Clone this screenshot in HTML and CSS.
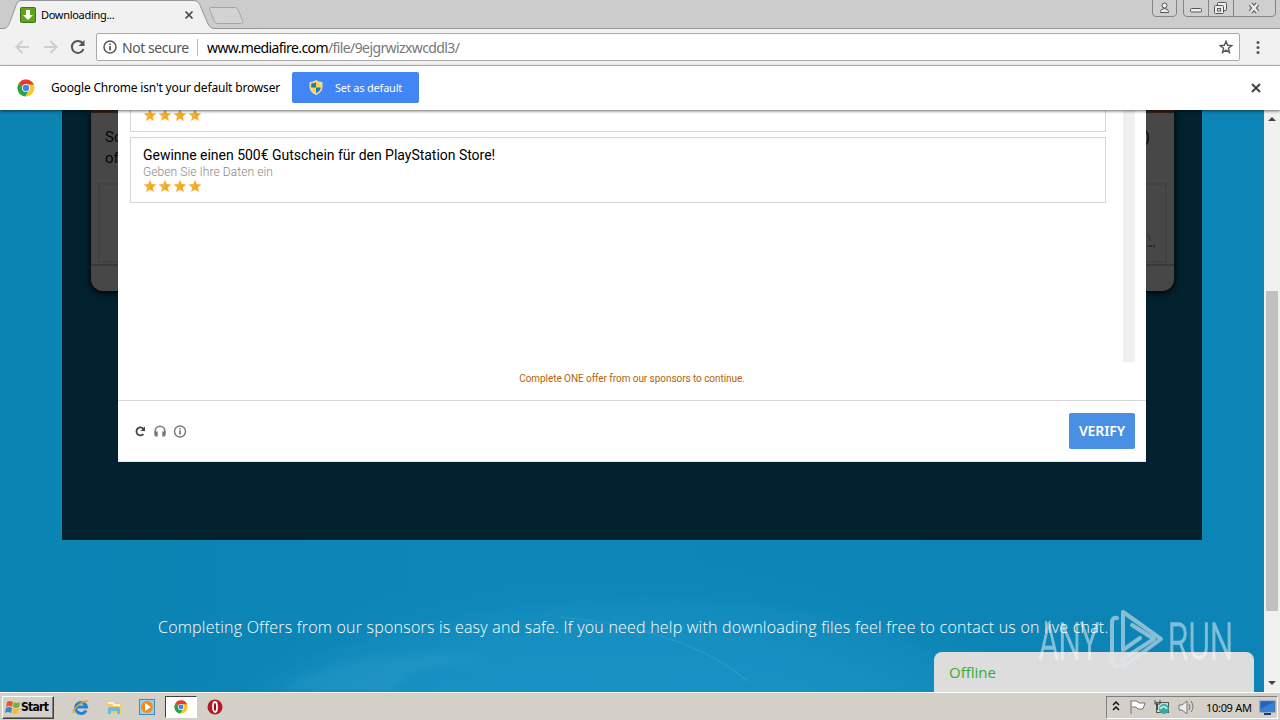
FILE: index.html
```html
<!DOCTYPE html>
<html lang="en">
<head>
<meta charset="utf-8">
<title>Downloading...</title>
<link rel="stylesheet" href="styles.css">
</head>
<body>
<svg class="defs" width="0" height="0">
  <defs>
    <symbol id="star" viewBox="0 0 14 14"><path d="M7 .8l1.800 4.100 4.600.5-3.500 3 1 4.600L7 10.700 3.100 13l1-4.600-3.500-3 4.600-.5z" fill="#f3b13c"/><path d="M7 3l1.100 3 3 .3-2.400 2 .7 2.800L7 9.500z" fill="#f5a800"/></symbol>
    <symbol id="chrome" viewBox="0 0 18 18">
      <circle cx="9" cy="9" r="8.500" fill="#fbc926"/>
      <path d="M9 9L1.640 4.750A8.500 8.500 0 0 1 16.800 5.500H9z" fill="#e33b2e"/>
      <path d="M9 9L1.640 4.750A8.500 8.500 0 0 0 8.200 17.500L12 11z" fill="#2ba24c"/>
      <circle cx="9" cy="9" r="4" fill="#fff"/><circle cx="9" cy="9" r="3.200" fill="#4385ee"/>
    </symbol>
  </defs>
</svg>

<header class="tabstrip">
  <svg class="tab-shape" width="260" height="29"><path d="M0 28.500H4C8 28 9 24 11 19L16.500 4Q18 .5 21 .5H194Q198 .5 199.500 4L208 24Q210 28.500 214 28.500H260V29H0z" fill="#f1f1f1"/><path d="M0 28.500H4C8 28 9 24 11 19L16.500 4Q18 .5 21 .5H194Q198 .5 199.500 4L208 24Q210 28.500 214 28.500H260" fill="none" stroke="#949494"/><path d="M211 7.500h24q2 0 3 2l4.500 11q1 3-1 3h-24q-2 0-3-2l-5-12q-.5-2 1.500-2z" fill="#d3d3d3" stroke="#a5a5a5"/></svg>
  <div class="tab">
    <svg width="16" height="16"><rect x=".5" y=".5" width="15" height="15" rx="1" fill="#5fa51b" stroke="#397711"/><path d="M6 3h4v5h3l-5 5-5-5h3z" fill="#fff"/></svg>
    <span class="tab-title">Downloading...</span>
    <svg class="tab-close" width="10" height="10"><path d="M1.500 1.500l7 7m0-7l-7 7" stroke="#444" stroke-width="1.700"/></svg>
  </div>
  <svg class="window-buttons" width="128" height="18">
    <g fill="#cfcfcf" stroke="#858585"><path d="M.5-1V13Q.5 16.500 4 16.500H20Q24.500 16.500 24.500 13V-1z"/><path d="M31.500-1V13Q31.500 16.500 35 16.500H119Q123.500 16.500 123.500 13V-1zM56.500 0V16M81.500 0V16"/></g>
    <g fill="#eee" stroke="#555"><path d="M8.500 12.500v-1q0-2.500 4-3 4 .5 4 3v1z"/><circle cx="12.500" cy="5.500" r="2.500"/><rect x="38.500" y="8.500" width="11" height="3.500" rx="1"/><rect x="65.500" y="2.500" width="9" height="8" rx="1"/><rect x="62.500" y="5.500" width="9" height="8" rx="1"/><rect x="65.500" y="8.500" width="3" height="2.500"/></g>
    <path d="M98.500 4l7 8m0-8l-7 8" stroke="#555" stroke-width="4.500"/><path d="M98.500 4l7 8m0-8l-7 8" stroke="#eee" stroke-width="2.500"/>
  </svg>
</header>

<nav class="toolbar">
  <svg width="96" height="36" fill="none"><path d="M29 18H16.500m6-6l-6 6 6 6M44 18h12.500m-6-6l6 6-6 6" stroke="#cecece" stroke-width="2"/><path d="M82.800 14.500A6 6 0 1 0 83.500 20" stroke="#555" stroke-width="2"/><path d="M84.500 11v6h-6z" fill="#555"/></svg>
  <div class="omnibox">
    <svg width="14" height="14"><circle cx="7" cy="7" r="6" fill="none" stroke="#555" stroke-width="1.500"/><path d="M7 6v4.500M7 3.500v1.500" stroke="#555" stroke-width="1.700"/></svg>
    <span class="secure">Not secure</span>
    <span class="url"><b>www.mediafire.com</b><i>/file/9ejgrwizxwcddl3/</i></span>
    <svg class="bookmark" width="14" height="14"><path d="M7 1.300l1.600 4 4.200.3-3.300 2.700 1 4.200L7 10.200l-3.500 2.300 1-4.200L1.200 5.600l4.200-.3z" fill="none" stroke="#555" stroke-width="1.400"/></svg>
  </div>
  <svg class="menu" width="4" height="14" fill="#555"><circle cx="2" cy="2.500" r="1.500"/><circle cx="2" cy="7.500" r="1.500"/><circle cx="2" cy="12.500" r="1.500"/></svg>
</nav>

<section class="infobar">
  <svg width="18" height="18"><use href="#chrome"/></svg>
  <span class="info-text">Google Chrome isn't your default browser</span>
  <button class="default-button">
    <svg width="14" height="15"><path d="M7 .5Q9.500 2.500 13 2.500V7q0 5-6 7.500Q1 12 1 7V2.500Q4.500 2.500 7 .5z" fill="#ffd84c" stroke="#e8e4c4"/><path d="M7 2.200v5.300H2.200V3.600Q5 3.600 7 2.200zM7 7.500h4.800Q11.500 11 7 13.200z" fill="#2178b8"/></svg>
    <span>Set as default</span>
  </button>
  <svg class="info-close" width="10" height="10"><path d="M1 1l8 8m0-8L1 9" stroke="#444" stroke-width="2"/></svg>
</section>

<main class="page">
  <div class="viewport">
    <svg class="backdrop" width="1264" height="582">
      <defs>
        <radialGradient id="glow"><stop offset="0" stop-color="#1d97c9"/><stop offset=".7" stop-color="#1892c4" stop-opacity=".75"/><stop offset="1" stop-color="#1188bb" stop-opacity="0"/></radialGradient>
        <filter id="soft"><feGaussianBlur stdDeviation="5"/></filter>
      </defs>
      <ellipse cx="625" cy="700" rx="490" ry="250" fill="url(#glow)"/>
      <path d="M250 582Q350 508 600 491Q820 480 935 545L980 582z" fill="#2199c9" opacity=".14" filter="url(#soft)"/>
      <path d="M560 507Q690 520 748 572" fill="none" stroke="#4aaed5" opacity=".28" stroke-width="1.500"/>
      <path d="M290 574q70-40 200-28l-75 14-28 22h-100z" fill="#42a7d0" opacity=".2" filter="url(#soft)"/>
    </svg>
    <section class="shade">
      <div class="under-card">
        <p class="left-copy">So<br>of</p>
        <p class="right-copy">)</p>
        <div class="under-box"><svg width="18" height="22"><path d="M-1 4q4 0 4 6" fill="none" stroke="#292929"/><path d="M-2 15h10" stroke="#292929" stroke-width="2" stroke-dasharray="3 1"/></svg></div>
        <div class="under-line"></div>
      </div>
      <div class="modal">
        <div class="offers-row">
          <div class="offers">
            <article class="offer previous"><div class="stars"><svg><use href="#star"/></svg><svg><use href="#star"/></svg><svg><use href="#star"/></svg><svg><use href="#star"/></svg></div></article>
            <article class="offer"><h2>Gewinne einen 500€ Gutschein für den PlayStation Store!</h2><p>Geben Sie Ihre Daten ein</p><div class="stars"><svg><use href="#star"/></svg><svg><use href="#star"/></svg><svg><use href="#star"/></svg><svg><use href="#star"/></svg></div></article>
          </div>
          <div class="offer-scroll"></div>
        </div>
        <p class="notice"><span>Complete ONE offer from our sponsors to continue.</span></p>
        <footer class="modal-footer">
          <svg width="56" height="16" fill="none"><path d="M10.500 5.800A4 4 0 1 0 10.500 11" stroke="#444" stroke-width="1.800"/><path d="M12 3.500v4.500H7.500z" fill="#444"/><path d="M22.200 11V8a4.800 4.800 0 0 1 9.600 0v3" stroke="#777" stroke-width="1.600"/><path d="M21.500 8.500h3.200V13.500h-1.500q-1.700 0-1.700-1.500zM32.500 8.500h-3.200V13.500h1.500q1.700 0 1.700-1.500z" fill="#777"/><circle cx="47" cy="8.500" r="5.500" stroke="#777" stroke-width="1.400"/><path d="M47 7.500v4M47 5.300V6.500" stroke="#777" stroke-width="1.700"/></svg>
          <button class="verify">VERIFY</button>
        </footer>
      </div>
    </section>
    <p class="help"><span>Completing Offers from our sponsors is easy and safe. If you need help with downloading files feel free to contact us on live chat.</span></p>
    <aside class="chat"><span>Offline</span></aside>
    <svg class="watermark" width="204" height="70">
      <g fill="#fff" stroke="#fff" stroke-width="1.300" opacity=".48"><text x="2" y="53" textLength="60" lengthAdjust="spacingAndGlyphs">ANY</text><text x="131" y="53" textLength="65" lengthAdjust="spacingAndGlyphs">RUN</text></g>
      <g fill="none" stroke="#e0e7ec" opacity=".58" stroke-width="4" stroke-linejoin="round" stroke-linecap="round"><path d="M80 12q-5-1-5 5V56q0 5 5 4M106 20L86 6V44l17-12M86 6L124 33L86 61v-8l31-20-22-14"/></g>
    </svg>
  </div>
  <div class="page-scroll">
    <svg width="16" height="16"><path d="M4 11l4-4 4 4z" fill="#444"/></svg><div class="thumb"></div><svg class="down" width="16" height="16"><path d="M4 5l4 4 4-4z" fill="#444"/></svg>
  </div>
</main>

<footer class="taskbar">
  <button class="start"><svg width="17" height="16"><path d="M3 3q3-2 6 0L8 8Q5 6 2 8z" fill="#e85b27"/><path d="M10 3q3 2 6 0l-1 5q-3 2-6 0z" fill="#71b33c"/><path d="M2 9q3-2 6 0l-1 5q-3-2-6 0z" fill="#3583c8"/><path d="M9 9q3 2 6 0l-1 5q-3 2-6 0z" fill="#f7bd25"/></svg><span>Start</span></button>
  <div class="launchers">
    <svg width="18" height="18" fill="none"><path d="M14 12.500A5.500 5.500 0 1 1 14.500 9H4" stroke="#2682d0" stroke-width="3"/><path d="M2 15Q-1 13 8 6 15 1 16 4" stroke="#e0ab20" stroke-width="1.500"/></svg>
    <svg width="18" height="18"><path d="M2 3h5l1 2h8v10H2z" fill="#f2cc66"/><path d="M3 5h5l1 2h6" stroke="#fff4b9" stroke-width="2" fill="none"/><path d="M3 16v-5q0-2 2-2h8q2 0 2 2v5h-3v-3H6v3z" fill="#6fb9df"/></svg>
    <svg width="18" height="18"><rect x="1.500" y="1.500" width="15" height="15" fill="#9bd0ec" stroke="#4389c6"/><circle cx="9" cy="9" r="6" fill="#ed8d22"/><path d="M7 5l6 4-6 4z" fill="#fff"/></svg>
    <div class="active-app"><svg width="14" height="14"><use href="#chrome"/></svg></div>
    <svg width="18" height="18"><circle cx="9" cy="9" r="7.500" fill="#b41821"/><ellipse cx="9" cy="9" rx="2" ry="5" fill="#8b1018" stroke="#fff" stroke-width="1.800"/></svg>
  </div>
  <div class="tray">
    <svg width="88" height="20" fill="none"><path d="M6 8l3-3 3 3M6 13l3-3 3 3" stroke="#111" stroke-width="1.500"/><path d="M24 17V3M25 4h5l2 2h6l-2 6h-5l-2-2h-4" fill="#fff" stroke="#777"/><rect x="49.500" y="5.500" width="12" height="10" fill="#c9dce2" stroke="#555"/><path d="M48 3v4h5V3m-2.500 4v6" stroke="#444"/><circle cx="57" cy="12" r="5" fill="#36aaa0"/><path d="M53 12q4-5 7 0" stroke="#b1ede0" stroke-width="2"/><path d="M72 8h3l5-4v13l-5-4h-3z" fill="#eee" stroke="#777"/><path d="M82 7q2 3 0 6M84 4q4 6 0 11" stroke="#777"/></svg>
    <span class="clock">10:09 AM</span>
    <svg width="17" height="18"><rect x="1" y="3" width="15" height="11" fill="#2463bb" stroke="#6488bc"/><path d="M1 11l14-7v10H1z" fill="#3881d2"/><path d="M5 16h7" stroke="#173d76" stroke-width="2"/></svg>
  </div>
</footer>
</body>
</html>
```
FILE: styles.css
```css
*{box-sizing:border-box}
body{margin:0;width:1280px;height:720px;overflow:hidden;display:flex;flex-direction:column;font-family:"Noto Sans",sans-serif;color:#000}
p,h2{margin:0;font-weight:400}
button{border:0;padding:0;font:inherit}
svg{display:block;flex:none}
.defs{position:absolute}
.tabstrip{height:29px;flex:none;background:#ccc;border-bottom:1px solid #999;position:relative;display:flex;justify-content:space-between}
.tab-shape{position:absolute;left:0;top:0}
.tab{position:relative;display:flex;align-items:center;width:200px;height:29px;padding-left:20px}
.tab-title{font-size:11px;margin-left:5px;letter-spacing:-.3px;white-space:nowrap}
.tab-close{margin-left:auto;margin-right:6px}
.window-buttons{position:relative}
.toolbar{height:37px;flex:none;background:#f1f1f1;border-bottom:1px solid #b9b9b9;display:flex;align-items:center}
.omnibox{width:1144px;height:28px;border:1px solid #a9a9a9;border-radius:2px;background:#fff;display:flex;align-items:center;padding:0 6px;font-size:14px;white-space:nowrap}
.secure{color:#555;margin-left:5px;line-height:17px;border-right:1px solid #bbb;width:76px;letter-spacing:-.45px}
.url{margin-left:9px;letter-spacing:-.6px}
.url b,.url i{font-weight:400;font-style:normal}
.url i{color:#777}
.bookmark{margin-left:auto}
.menu{margin-left:16px}
.infobar{height:44px;flex:none;background:#fff;display:flex;align-items:center;padding:0 0 1px 17px;position:relative;z-index:2;box-shadow:0 1px 3px #0009}
.info-text{margin-left:16px;width:241px;font-size:12px;letter-spacing:-.17px;white-space:nowrap}
.default-button{width:127px;height:31px;border-radius:2px;background:#4285f4;color:#fff;display:flex;align-items:center;padding-left:17px;font-size:11px;letter-spacing:-.2px;white-space:nowrap}
.default-button span{margin-left:12px}
.info-close{margin-left:auto;margin-right:19px}
.page{height:582px;flex:none;display:flex}
.viewport{width:1264px;height:582px;position:relative;background:linear-gradient(90deg,#0b83b3,#0c87b8 40%,#0c84b5);overflow:hidden}
.backdrop{position:absolute;left:0;top:0}
.shade{position:relative;height:430px;margin:0 62px;background:#03222f;padding:0 28px 0 29px}
.under-card{height:181px;background:#474747;border-top:3px solid #352015;border-radius:0 0 12px 12px;box-shadow:0 2px 7px #000;position:relative;font:300 15px/21px "Roboto",sans-serif;color:#050505}
.left-copy{position:absolute;left:14px;top:14px}
.right-copy{position:absolute;right:24px;top:14px}
.under-box{position:absolute;left:7px;right:7px;top:70px;height:80px;border:2px solid #414141;display:flex;justify-content:flex-end;align-items:flex-end;padding-bottom:8px}
.under-line{position:absolute;left:0;right:0;top:151px;height:2px;background:#393939}
.modal{position:absolute;left:56px;top:0;width:1028px;height:352px;background:#fff;border-bottom:1px solid #e3e8ea;display:flex;flex-direction:column;font-family:"Roboto",sans-serif}
.offers-row{display:flex;justify-content:space-between;height:252px;padding:0 11px 0 12px}
.offers{width:976px;display:flex;flex-direction:column;gap:5px}
.offer{height:66px;border:1px solid #d5d5d5;padding:9px 12px}
.offer.previous{height:22px;border-top:0;padding-top:0;overflow:hidden}
.offer h2{font-size:14px;line-height:17px;letter-spacing:-.02px}
.offer p{font:300 12px/15px "Roboto",sans-serif;color:#888;letter-spacing:.08px;padding-top:1px;height:15px}
.stars{display:flex;gap:1px;height:15px}
.previous .stars{margin-top:-2px}
.stars svg{width:14px;height:14px}
.offer-scroll{width:12px;background:#f0f0f0}
.notice{height:38px;flex:none;text-align:center;font-size:10px;line-height:33px;color:#b4630b;letter-spacing:-.06px}
.modal-footer{border-top:1px solid #d8d8d8;height:61px;padding:0 11px 0 15px;display:flex;justify-content:space-between;align-items:center}
.verify{width:66px;height:36px;padding-bottom:2px;border-radius:2px;background:#4a90e2;color:#fff;font:600 14px "Noto Sans",sans-serif;letter-spacing:-.1px}
.help{position:relative;padding:75px 0 0 158px;color:#fff;font:300 16px/24px "Open Sans",sans-serif;letter-spacing:.22px;white-space:nowrap}
.chat{position:absolute;left:934px;top:542px;width:320px;height:40px;background:#ddd;border-radius:8px 8px 0 0;padding:8px 15px;color:#3caa3c;font:15px/24px "Open Sans",sans-serif}
.watermark{position:absolute;left:1037px;top:496px;overflow:visible;font:300 50px "Roboto",sans-serif}
.page-scroll{width:16px;background:#f1f1f1;display:flex;flex-direction:column}
.thumb{width:12px;height:320px;margin:165px 2px 0;background:#c1c1c1}
.down{margin-top:auto}
.taskbar{height:28px;flex:none;background:#d4d0c8;border-top:1px solid #fff;display:flex;align-items:center;padding:2px 2px 1px 2px}
.start{width:52px;height:23px;background:#d4d0c8;border:1px solid;border-color:#fff #404040 #404040 #fff;box-shadow:inset -1px -1px #808080;display:flex;align-items:center;font:bold 12px "DejaVu Sans Condensed",sans-serif;letter-spacing:-.7px;padding-left:1px}
.launchers{display:flex;align-items:center;gap:15px;margin-left:18px}
.active-app{width:32px;height:22px;margin:0 -6px 0 -6px;border:1px solid;border-color:#404040 #fff #fff #404040;background:#fff;display:flex;align-items:center;justify-content:center}
.tray{width:172px;height:23px;margin-left:auto;border:1px solid;border-color:#808080 #fff #fff #808080;display:flex;align-items:center;padding-right:1px;white-space:nowrap}
.clock{font-size:11px;width:54px;margin-left:11px;margin-right:auto;letter-spacing:-.3px}
```
